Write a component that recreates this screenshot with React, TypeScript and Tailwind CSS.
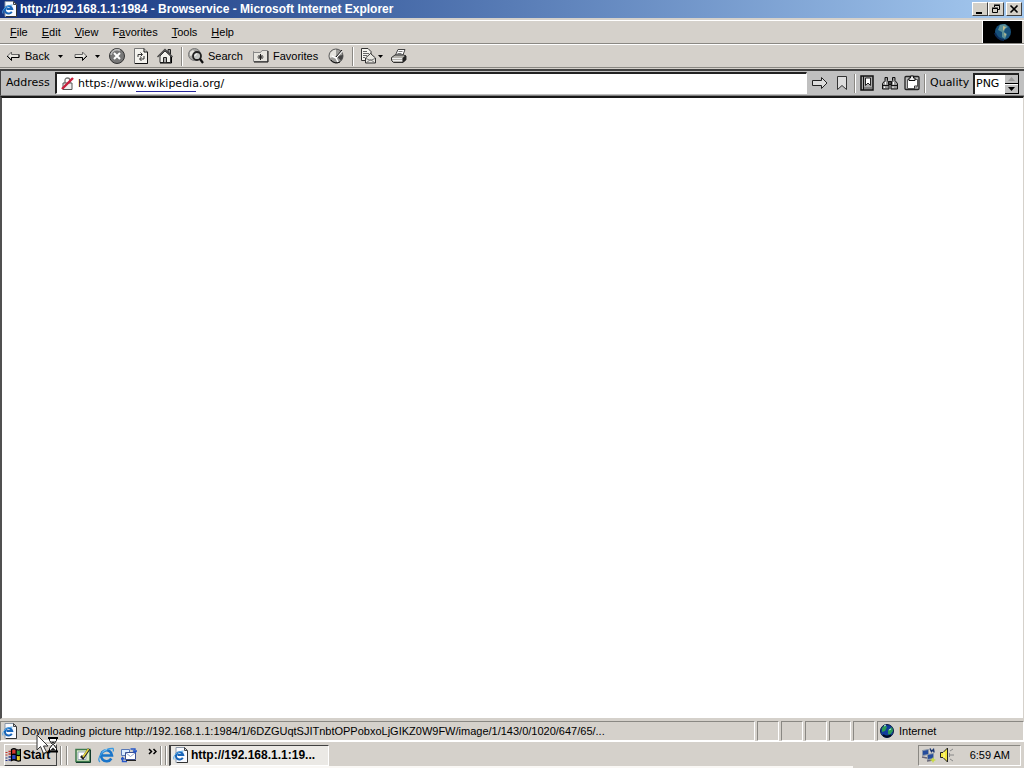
import type { ReactNode } from "react";

const sans = "font-['Liberation_Sans',Arial,sans-serif]";
const wide = "font-['DejaVu_Sans',Verdana,sans-serif]";

function Svg({ w = 16, h = 16, children }: { w?: number; h?: number; children: ReactNode }) {
  return (
    <svg width={w} height={h} viewBox={`0 0 ${w} ${h}`} className="shrink-0" aria-hidden="true" fill="none">
      {children}
    </svg>
  );
}

function IePage() {
  return (
    <Svg>
      <path d="M3 .5h8.5l3 3v12H3z" fill="#f8faff" stroke="#8a97a8" />
      <path d="M11.5.5v3h3z" fill="#c8d4e4" stroke="#444" />
      <path d="M14.5 4v11.5H4" stroke="#333" />
      <path d="M9.8 10.8a3.7 3.7 0 1 1 .4-2.8H4.5" stroke="#1764b8" strokeWidth="2" />
      <path d="M1 12.5C-.5 9 4 4.500 10.500 4" stroke="#4fa6e8" />
    </Svg>
  );
}

function Caret() {
  return (
    <Svg w={5} h={3}>
      <path d="M0 0h5L2.500 3z" fill="#000" />
    </Svg>
  );
}

function BackArrow() {
  return (
    <Svg w={14} h={12}>
      <path d="M5.500 2L1.500 6l4 4V7.500H13V4.500H5.500z" fill="#e8e6e0" stroke="#666" />
      <path d="M1 6l4.500 4.500v-3H13v-3" stroke="#000" />
    </Svg>
  );
}

function ForwardArrow() {
  return (
    <Svg w={14} h={12}>
      <path d="M8.500 2l4 4-4 4V7.500H1V4.500h7.500z" fill="#e8e6e0" stroke="#666" />
      <path d="M1 7.500h7.500v3L13 6" stroke="#000" />
    </Svg>
  );
}

function StopIcon() {
  return (
    <Svg>
      <circle cx="8" cy="8" r="7.500" fill="#777" stroke="#333" />
      <path d="M2 7a6 6 0 0 1 9-4.500" stroke="#bbb" strokeWidth="1.500" />
      <path d="M5 5l6 6M11 5l-6 6" stroke="#fff" strokeWidth="2" />
    </Svg>
  );
}

function RefreshIcon() {
  return (
    <Svg w={14}>
      <path d="M.5.5H10L13.500 4v11.500H.5z" fill="#f4f3ee" stroke="#777" />
      <path d="M10 .5V4h3.500v11.500H1" stroke="#111" />
      <path d="M4 9V6.500h4M6.500 4.500l2 2-2 2M10 8v3H6M7.500 9l-2 2 2 2" stroke="#333" />
    </Svg>
  );
}

function HomeIcon() {
  return (
    <Svg>
      <path d="M11 1.500h2.500V6L11 4z" fill="#999" stroke="#222" />
      <path d="M3 8v6.500h10.500V8L8 3z" fill="#f3f2ed" stroke="#333" />
      <path d="M.5 9L8 1.500 15.500 9" stroke="#444" strokeWidth="1.400" />
      <path d="M6.500 14.500v-5h3v5" fill="#aaa" stroke="#222" />
      <path d="M3 15h11.500V9" stroke="#000" />
    </Svg>
  );
}

function SearchIcon() {
  return (
    <Svg>
      <circle cx="6.500" cy="6.500" r="6" fill="#a6a6a3" stroke="#777" />
      <path d="M2 4l3-2 2 2-2 3-3 1z" fill="#e5e5df" />
      <circle cx="9" cy="8" r="4" fill="#c4c7c4" stroke="#222" strokeWidth="1.800" />
      <path d="M7 8c0-1.500 1-2 2-2" stroke="#fff" />
      <path d="M12 11l3 4" stroke="#111" strokeWidth="2.200" />
    </Svg>
  );
}

function FavoritesIcon() {
  return (
    <Svg>
      <path d="M.5 3.500v10h14v-11H9l-1.500 2h-7z" fill="#e7e5df" stroke="#888" />
      <path d="M1 14h14V3" stroke="#111" />
      <path d="M7.500 6v6M4.500 9h6M5.500 7l4 4M9.500 7l-4 4" stroke="#222" />
    </Svg>
  );
}

function HistoryIcon() {
  return (
    <Svg>
      <circle cx="8" cy="8" r="7" fill="#9b9b98" stroke="#555" />
      <path d="M8 8V1.500A6.500 6.500 0 0 0 2 10z" fill="#e5e4df" />
      <path d="M8 8l5 4.500A7 7 0 0 0 15 7z" fill="#444" />
      <path d="M4 8l4 2 6-7M8 10l2 4" stroke="#fff" strokeWidth="1.500" />
      <path d="M8 9l6-7M3 12a7 7 0 0 0 9 2" stroke="#111" />
    </Svg>
  );
}

function MailIcon() {
  return (
    <Svg>
      <path d="M1.500.5H8L11 3.500v9H1.500z" fill="#f5f4ef" stroke="#333" />
      <path d="M3 3.500h4M3 5.500h6M3 7.500h4M3 9.500h2" stroke="#666" />
      <path d="M5.500 10l5-4.500 5 4.500v5h-10z" fill="#e9e8e2" stroke="#333" />
      <path d="M6 15l4.500-3.500L15 15M6 10.500l4.500 2 4.500-2" stroke="#777" />
    </Svg>
  );
}

function PrinterIcon() {
  return (
    <Svg>
      <path d="M4.500 7l2.500-5.500h7L12 7z" fill="#fff" stroke="#444" />
      <path d="M7.500 3.500h4M6.500 5.500h4" stroke="#777" />
      <path d="M.5 9.500L4 7h8.500L15 8v3.500L12 14.500H2.500l-2-2z" fill="#b4b2ac" stroke="#333" />
      <path d="M1 10.500h10.500M2 12.500h9.500" stroke="#eee" />
      <path d="M11.500 10l3.500-3v5l-3.500 3z" fill="#222" />
    </Svg>
  );
}

function CrossedLock() {
  return (
    <Svg w={13} h={13}>
      <path d="M4 6V3.500Q4 1 6.500 1T9 3.500V6" stroke="#777" strokeWidth="1.300" />
      <path d="M2 6h9v6.500H2z" fill="#eee" stroke="#555" />
      <path d="M1 12L12 1" stroke="#c8203c" strokeWidth="2.400" />
    </Svg>
  );
}

function GoIcon() {
  return (
    <Svg>
      <path d="M.5 5.500h9v-3L15 8l-5.500 5.500v-3h-9z" fill="#ddd" stroke="#222" />
    </Svg>
  );
}

function BookmarkIcon() {
  return (
    <Svg w={12}>
      <path d="M1.500 1.500h9v13L6 10.500l-4.500 4z" fill="#ddd" stroke="#333" />
    </Svg>
  );
}

function BookmarksIcon() {
  return (
    <Svg w={14}>
      <path d="M1 1h12v14H1z" fill="#aaa" stroke="#111" strokeWidth="1.500" />
      <path d="M3.500 1v14" stroke="#111" />
      <path d="M5.500 3v7.500L8 8l2.500 2.500V3z" fill="#fff" stroke="#222" />
      <path d="M4 13h9" stroke="#555" />
    </Svg>
  );
}

function FindIcon() {
  return (
    <Svg w={18}>
      <path d="M4 2.500h2.500v3L8 8v6H1.500V8.500L4 5.500zM11.500 2.500H14v3l2.500 3V14H10V8l1.500-2.500z" fill="#999" stroke="#111" />
      <path d="M7.500 6.500h3v3h-3z" fill="#444" stroke="#111" />
      <path d="M1.500 10.500H8M10 10.500h6.500" stroke="#111" />
      <path d="M4.500 7v2.500M12.500 7v2.500M3.500 11.500V13M12 11.500V13" stroke="#fff" />
    </Svg>
  );
}

function ClipboardIcon() {
  return (
    <Svg>
      <path d="M2 1.500h12q1 0 1 1v11q0 1-1 1H2q-1 0-1-1v-11q0-1 1-1z" fill="#bbb" stroke="#222" strokeWidth="1.300" />
      <path d="M3.500 4.500h10V11L11 13.500H3.500z" fill="#fff" stroke="#555" />
      <path d="M10.500 13.500V11h3" stroke="#333" />
      <path d="M5 3h1.500V1h3v2H11v2.500H5z" fill="#eee" stroke="#111" />
    </Svg>
  );
}

function Globe() {
  return (
    <Svg w={18} h={18}>
      <circle cx="9" cy="9" r="8" fill="#17517c" />
      <path d="M6 2l5-1 3 3-3 2-1 3 3 2-2 5-3-2V9L4 7z" fill="#5a8f96" />
      <path d="M9 3l3 1-3 4zM10 10l2 1-1 3z" fill="#c4bc8c" />
      <path d="M1 10c1 4 5 7 9 7" stroke="#0b2a55" strokeWidth="2" />
    </Svg>
  );
}

function ZoneGlobe() {
  return (
    <Svg w={14} h={14}>
      <circle cx="7" cy="7" r="6.500" fill="#123c9c" stroke="#071a40" />
      <path d="M2 4l3-3 2 2-2 4-3 1zM8 6l4-3 1 4-3 4-2-1z" fill="#2d9c55" />
      <path d="M4 2l2-1M9 6l2-1" stroke="#bfe8f4" />
      <path d="M3 11q4 3 8 0" stroke="#020a22" strokeWidth="2" />
    </Svg>
  );
}

function WindowsFlag() {
  return (
    <Svg>
      <path d="M7 3q2-1 4 0v4.500q-2-1-4 0z" fill="#d83a2c" />
      <path d="M11.500 3q2 1 4 0v4.500q-2 1-4 0z" fill="#2b9c45" />
      <path d="M7 8.500q2-1 4 0V13q-2-1-4 0z" fill="#2746c8" />
      <path d="M11.500 8.500q2 1 4 0V13q-2 1-4 0z" fill="#e8cb28" />
      <path d="M6.500 13.500V2.500q2.500-1.500 4.800 0 2 1 4.200.2v11q-2.200.8-4.200-.2-2.300-1.500-4.800 0zM11.200 2.500v11M6.500 8q2.500-1.500 4.800 0 2 1 4.200.2" stroke="#000" strokeWidth="1.300" />
      <path d="M3.500 4.500h2.500M3.500 7h2.500" stroke="#c03028" strokeWidth="1.600" />
      <path d="M3.500 10h2.500M3.500 13h2.500" stroke="#24368c" strokeWidth="1.600" />
      <path d="M.5 5.500h2M.5 8h2" stroke="#c03028" />
      <path d="M.5 11h2M.5 13.500h2" stroke="#24368c" />
    </Svg>
  );
}

function DesktopIcon() {
  return (
    <Svg>
      <path d="M1 2.500h14v12H1z" fill="#dcebc8" stroke="#3c7a4c" strokeWidth="1.500" />
      <path d="M3 5h8v7.500H3z" fill="#fff" stroke="#9ab" />
      <path d="M6 9l2 2 6-9" stroke="#222" strokeWidth="2.600" />
      <path d="M8 10l5.500-8" stroke="#e9d93c" strokeWidth="1.500" />
      <path d="M1 15.500h14.500V3" stroke="#123a2a" />
    </Svg>
  );
}

function IeIcon() {
  return (
    <Svg>
      <path d="M13.300 11.500a5.500 5.500 0 1 1 .7-3H4" stroke="#1974c9" strokeWidth="2.600" />
      <path d="M2 15C-2 11 6 1 15 1.500c1 1 .5 2 0 3" stroke="#3a98e0" strokeWidth="1.300" />
      <path d="M4 5.500q2-3 5-3" stroke="#8fd0fa" />
    </Svg>
  );
}

function OutlookIcon() {
  return (
    <Svg>
      <path d="M.5 2.500h8v6h-8z" fill="#dcecff" stroke="#5878b8" />
      <path d="M4.500 5.500h10v7h-10z" fill="#fff" stroke="#3a4f90" />
      <path d="M5 6l4.500 3.500L14 6" stroke="#90a4d0" />
      <path d="M9.500 2h4.500v3M12 3.500l2 2 2-2M6 14.500H1.500V11M0 12.500l1.500-2 2 2" stroke="#2456c8" strokeWidth="1.400" />
      <path d="M5 13.500h10" stroke="#222" />
    </Svg>
  );
}

function NetworkIcon() {
  return (
    <Svg>
      <path d="M1.500 3.500l6-1v5l-6 1zM6.500 7.500l6-1v5l-6 1z" fill="#244c9c" stroke="#8896a8" />
      <path d="M1 10l5 1M6 14l6-1" stroke="#667" strokeWidth="1.600" />
      <path d="M9 1.500l1.500 3 2-2 .5 3" stroke="#1b3670" strokeWidth="1.500" />
      <path d="M12 10l1 2 2 1-2 1-1 2-1-2-2-1 2-1z" fill="#c9dc44" />
    </Svg>
  );
}

function VolumeIcon() {
  return (
    <Svg>
      <path d="M1.500 5.500H4L8.500 1v14L4 10.500H1.500z" fill="#f3e83c" stroke="#222" />
      <path d="M5 5v6" stroke="#fffbb0" />
      <path d="M11 4l3-2M11 8h4M11 12l3 2M10.500 6v4" stroke="#888" />
    </Svg>
  );
}

function BusyPointer() {
  return (
    <Svg w={24} h={22}>
      <path d="M1 1v15l3.500-3.500 3 7 3-1.500-3-6H12z" fill="#fff" stroke="#333" />
      <path d="M13.500 4v2.500L16.500 10.500l-3 4V17h7v-2.500l-3-4 3-4V4z" fill="#fff" stroke="#000" />
      <path d="M12 4h10M12 17.500h10" stroke="#000" strokeWidth="2" />
      <path d="M15 7.500h4l-2 2.500zM14.500 16l2.500-2.500 2.500 2.500z" fill="#222" />
    </Svg>
  );
}

function Rule() {
  return <span className="h-[19px] w-0.5 shrink-0 border-l border-r border-l-[#8a8883] border-r-white" />;
}

function WindowButton({ label, children }: { label: string; children: ReactNode }) {
  return (
    <button
      aria-label={label}
      className="flex h-3.5 w-4 items-center justify-center border border-t-white border-l-white border-r-[#404040] border-b-[#404040] bg-[#d4d0c8]"
    >
      {children}
    </button>
  );
}

function ToolButton({ label, className, children }: { label: string; className: string; children: ReactNode }) {
  return (
    <button type="button" aria-label={label} className={`flex shrink-0 items-center whitespace-nowrap ${className}`}>
      {children}
    </button>
  );
}

const menus = ["File", "Edit", "View", "Favorites", "Tools", "Help"];
const underlined = [0, 0, 0, 1, 0, 0];

function TitleBar() {
  return (
    <header className="flex h-[18px] shrink-0 items-center bg-linear-to-r from-[#14317c] to-[#a6caf0] px-0.5">
      <IePage />
      <h1 className="ml-0.5 min-w-0 flex-1 truncate text-xs font-bold text-white">
        http://192.168.1.1:1984 - Browservice - Microsoft Internet Explorer
      </h1>
      <div className="flex">
        <WindowButton label="Minimize">
          <Svg w={10} h={10}><path d="M1 8h6v2H1z" fill="#000" /></Svg>
        </WindowButton>
        <WindowButton label="Restore">
          <Svg w={10} h={10}>
            <path d="M3.500 3V1.500h5v4H7M3 1h6M1.500 4.500h5v4h-5zM1 4h6" stroke="#000" />
          </Svg>
        </WindowButton>
        <span className="w-0.5" />
        <WindowButton label="Close">
          <Svg w={10} h={10}><path d="M1.500 1.500l7 7M8.500 1.500l-7 7" stroke="#000" strokeWidth="1.600" /></Svg>
        </WindowButton>
      </div>
    </header>
  );
}

function MenuBar() {
  return (
    <div className="mt-0.5 flex h-6 shrink-0 border-t border-b border-t-white border-b-[#8a8883]">
      <nav className="flex flex-1 items-center pl-[3px]">
        {menus.map((m, i) => (
          <button key={m} className="px-[7px]">
            {m.slice(0, underlined[i])}
            <u>{m[underlined[i]]}</u>
            {m.slice(underlined[i] + 1)}
          </button>
        ))}
      </nav>
      <div className="flex w-10 items-center justify-center border-l border-white bg-black">
        <Globe />
      </div>
      <span className="w-0.5" />
    </div>
  );
}

function ToolBar() {
  return (
    <div className="flex h-6 shrink-0 items-center border-t border-b border-t-white border-b-[#8a8883] pl-1.5">
      <ToolButton label="Back" className="w-[52px] gap-[5px]"><BackArrow />Back</ToolButton>
      <ToolButton label="Back history" className="w-4"><Caret /></ToolButton>
      <ToolButton label="Forward" className="w-[21px]"><ForwardArrow /></ToolButton>
      <ToolButton label="Forward history" className="w-3.5"><Caret /></ToolButton>
      <ToolButton label="Stop" className="w-[25px]"><StopIcon /></ToolButton>
      <ToolButton label="Refresh" className="w-[23px]"><RefreshIcon /></ToolButton>
      <ToolButton label="Home" className="w-6"><HomeIcon /></ToolButton>
      <Rule />
      <ToolButton label="Search" className="ml-[5px] w-[65px] gap-1"><SearchIcon />Search</ToolButton>
      <ToolButton label="Favorites" className="w-[75px] gap-1"><FavoritesIcon />Favorites</ToolButton>
      <ToolButton label="History" className="w-6"><HistoryIcon /></ToolButton>
      <Rule />
      <ToolButton label="Mail" className="ml-1.5 w-[31px] gap-0.5"><MailIcon /><Caret /></ToolButton>
      <ToolButton label="Print" className="w-5"><PrinterIcon /></ToolButton>
    </div>
  );
}

function AddressBar() {
  return (
    <form
      onSubmit={(e) => e.preventDefault()}
      className={`mt-px flex h-[27px] shrink-0 items-center border-t-2 border-b border-l border-t-[#404040] border-b-[#808080] border-l-[#404040] bg-[#c0c0c0] text-[11px] ${wide}`}
    >
      <label htmlFor="address" className="w-[54px] shrink-0 pl-[5px]">Address</label>
      <div className="flex h-[22px] min-w-0 flex-1 items-center gap-1 border-t-2 border-l-2 border-r border-b border-t-[#222] border-l-[#222] border-r-white border-b-white bg-white pl-1">
        <CrossedLock />
        <div className="relative flex min-w-0 flex-1">
          <input id="address" defaultValue="https://www.wikipedia.org/" className="w-full min-w-0 bg-transparent outline-none" />
          <span className="absolute bottom-0 left-[58px] h-px w-[60px] bg-[#28289c]" />
        </div>
      </div>
      <ToolButton label="Go" className="ml-[5px] w-6"><GoIcon /></ToolButton>
      <ToolButton label="Bookmark" className="w-[18px]"><BookmarkIcon /></ToolButton>
      <Rule />
      <ToolButton label="Bookmarks" className="ml-1 w-[21px]"><BookmarksIcon /></ToolButton>
      <ToolButton label="Find" className="w-[23px]"><FindIcon /></ToolButton>
      <ToolButton label="Clipboard" className="w-5"><ClipboardIcon /></ToolButton>
      <Rule />
      <label htmlFor="quality" className="w-[47px] shrink-0 pl-1">Quality</label>
      <div className="mr-[5px] flex h-[21px] w-[46px] shrink-0 border-t-2 border-l-2 border-[#222] bg-white">
        <select id="quality" className="w-[30px] appearance-none bg-white pl-px outline-none">
          <option>PNG</option>
        </select>
        <div className="flex flex-1 flex-col border-r border-b border-black bg-[#c0c0c0]">
          <button type="button" aria-label="Previous quality" className="flex flex-1 items-center justify-center border-b border-black">
            <Svg w={7} h={4}><path d="M0 4h7L3.500 0z" fill="#999" /></Svg>
          </button>
          <button type="button" aria-label="Next quality" className="flex flex-1 items-center justify-center border-t border-white">
            <Svg w={7} h={4}><path d="M0 0h7L3.500 4z" fill="#000" /></Svg>
          </button>
        </div>
      </div>
    </form>
  );
}

const pane = "border border-t-[#8a8883] border-l-[#8a8883] border-r-white border-b-white";

function StatusBar() {
  return (
    <footer className="flex h-5 shrink-0 gap-0.5">
      <div className={`flex min-w-0 flex-1 items-center gap-1 pl-px ${pane}`}>
        <IePage />
        <span className="truncate">
          Downloading picture http://192.168.1.1:1984/1/6DZGUqtSJITnbtOPPobxoLjGIKZ0W9FW/image/1/143/0/1020/647/65/...
        </span>
      </div>
      {[0, 1, 2, 3, 4].map((n) => (
        <div key={n} className={`w-[22px] ${pane}`} />
      ))}
      <div className={`flex w-[147px] items-center gap-[5px] pl-0.5 ${pane}`}>
        <ZoneGlobe />
        Internet
      </div>
    </footer>
  );
}

function TaskBar() {
  return (
    <div className="flex h-[27px] shrink-0 flex-col border-t border-white">
      <div className="flex min-h-0 flex-1 items-center pt-0.5 pr-[3px]">
        <button className="ml-1 flex h-[22px] w-[53px] shrink-0 items-center gap-0.5 border border-t-white border-l-white border-r-[#404040] border-b-[#404040] text-xs font-bold">
          <WindowsFlag />
          Start
        </button>
        <div className="mx-[3px] flex gap-1"><Rule /><Rule /></div>
        <div className="flex w-[89px] shrink-0 items-center gap-[7px] pl-1">
          <button aria-label="Show desktop"><DesktopIcon /></button>
          <button aria-label="Internet Explorer"><IeIcon /></button>
          <button aria-label="Outlook Express"><OutlookIcon /></button>
          <button aria-label="More" className="ml-1">
            <Svg w={9} h={14}><path d="M1 1l2.500 2.500L1 6M5.500 1L8 3.500 5.500 6" stroke="#000" strokeWidth="1.500" /></Svg>
          </button>
        </div>
        <div className="flex gap-[3px]"><Rule /><Rule /></div>
        <button className="ml-0.5 flex h-[21px] w-[160px] shrink-0 items-center gap-0.5 border-t border-r border-b border-l-2 border-t-[#404040] border-r-white border-b-white border-l-[#404040] bg-[#ebe9e5] pl-0.5 text-xs font-bold">
          <IePage />
          http://192.168.1.1:19...
        </button>
        <div className={`ml-auto flex h-[21px] w-[103px] shrink-0 items-center gap-0.5 pl-0.5 ${pane}`}>
          <NetworkIcon />
          <VolumeIcon />
          <time className="mr-2.5 ml-auto whitespace-nowrap">6:59 AM</time>
        </div>
      </div>
      <div className="h-0.5 w-5/6 bg-[#faf8f5]" />
    </div>
  );
}

export default function App() {
  return (
    <div className={`relative flex h-screen flex-col overflow-hidden bg-[#d5d1cb] text-[11px] leading-4 text-black ${sans}`}>
      <TitleBar />
      <MenuBar />
      <ToolBar />
      <AddressBar />
      <main className="mb-0.5 min-h-0 flex-1 border-t-2 border-r border-b border-l-2 border-t-[#181818] border-r-[#d5d1cb] border-b-[#d5d1cb] border-l-[#505050] bg-white" />
      <StatusBar />
      <TaskBar />
      <div className="pointer-events-none absolute bottom-3 left-9">
        <BusyPointer />
      </div>
    </div>
  );
}
